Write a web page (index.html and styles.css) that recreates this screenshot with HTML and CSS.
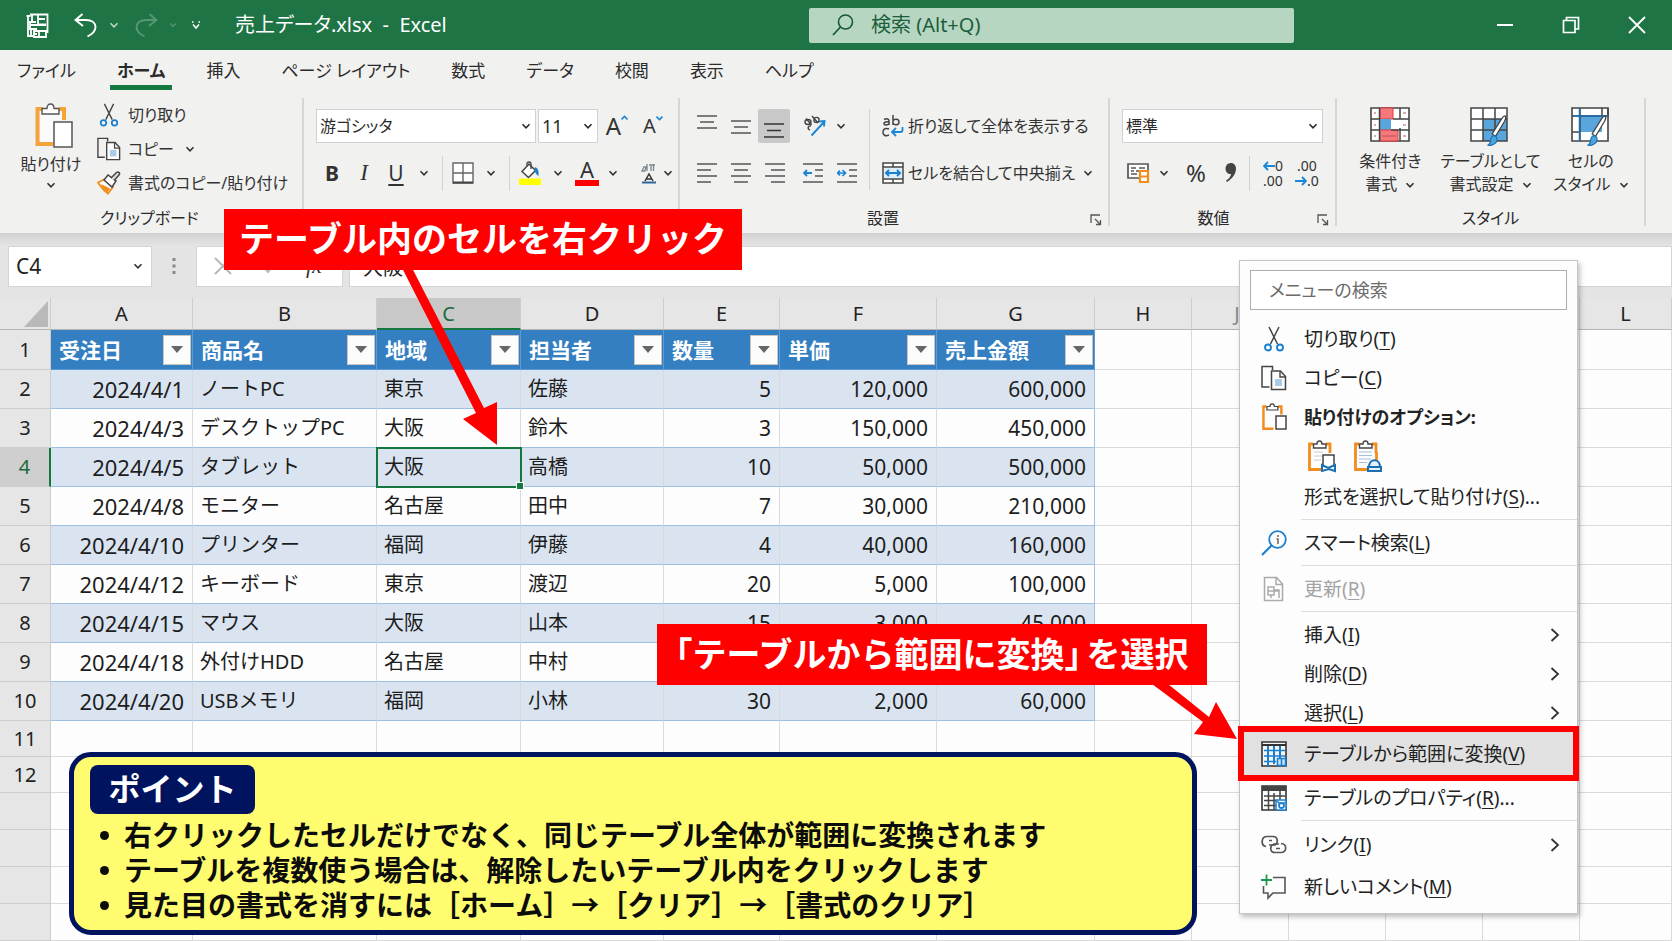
FILE: index.html
```html
<!DOCTYPE html>
<html lang="ja">
<head>
<meta charset="utf-8">
<title>売上データ.xlsx - Excel</title>
<link rel="stylesheet" href="styles.css">
</head>
<body>
<svg class="defs" aria-hidden="true">
  <symbol id="chev" viewBox="0 0 10 10"><path d="M1.5 3.2 5 6.8 8.5 3.2" fill="none" stroke="currentColor" stroke-width="1.6"/></symbol>
  <symbol id="right" viewBox="0 0 10 16"><path d="M1.500 2 8 8 1.500 14" fill="none" stroke="#333" stroke-width="1.800"/></symbol>
  <symbol id="scissors" viewBox="0 0 22 26"><path d="M6 1 14.500 18M16 1 7.500 18" fill="none" stroke="#444" stroke-width="1.500"/><circle cx="5" cy="21.500" r="3" fill="none" stroke="#1b7fcf" stroke-width="1.900"/><circle cx="17" cy="21.500" r="3" fill="none" stroke="#1b7fcf" stroke-width="1.900"/></symbol>
  <symbol id="copy" viewBox="0 0 26 26"><path d="M8.500 22H1V1.500h10.500V5" fill="none" stroke="#444" stroke-width="1.500"/><path d="M10.500 6h9l5 5.500V24.500h-14z" fill="#fdfdfd" stroke="#444" stroke-width="1.500"/><path d="M19 6.500V12h5.500" fill="none" stroke="#444" stroke-width="1.400"/><path d="M14 14h7v7h-7z" fill="#a9cbe6"/></symbol>
  <symbol id="paste" viewBox="0 0 40 46"><path d="M9 6H3.500v35H19M25 6h5v11" fill="none" stroke="#f5a33b" stroke-width="4"/><path d="M6 8h22v9h-9v22H6z" fill="#fafafa"/><path d="M8 11V5.500h5C13 2.500 14.500 1 16.500 1S20 2.500 20 5.500h5V11z" fill="#fff" stroke="#555" stroke-width="1.400"/><path d="M20 19h18v25H20z" fill="#fff" stroke="#555" stroke-width="1.500"/></symbol>
  <symbol id="clip" viewBox="0 0 28 32"><path d="M6 4H2.500v25.500H14M19 4h4v9" fill="none" stroke="#f28c1c" stroke-width="2.800"/><path d="M6.500 8V4H10c0-2 1-3 2.500-3S15 2 15 4h4v4z" fill="#fff" stroke="#444" stroke-width="1.400"/></symbol>
  <symbol id="launch" viewBox="0 0 12 12"><path d="M1 9V1h9M5 5l5.500 5.500M10.500 6v4.500H6" fill="none" stroke="#555" stroke-width="1.300"/></symbol>
  <symbol id="brush" viewBox="0 0 20 34"><path d="M18.500 1c1.500 2 0 4-1 6L8.500 22 5 19.500 15 3.500c1-1.500 2-2.500 3.500-2.500z" fill="#fff" stroke="#444" stroke-width="1.300"/><path d="M1 31c3-1 1.500-7 4-9s6 1 5 4.500S4 32 1 31z" fill="#4ba3dc" stroke="#1c6fb5" stroke-width="1.200"/></symbol>
</svg>

<div class="app">
  <header class="titlebar">
    <div class="quick">
      <button class="tool" aria-label="上書き保存"><svg width="24" height="25" viewBox="0 0 24 25"><path d="M5 1.500H22.500V20M3 4V23h5M1.500 3h4M7 2v7h4M7 9H5v7h7M13 6h7M13 11.500h8M13 2v9M6 16v7M9 18h12v6H9zM14 18v6M5 12h16M8 21h4" fill="none" stroke="#fff" stroke-width="1.800"/></svg></button>
      <button class="tool undo" aria-label="元に戻す"><svg width="24" height="26" viewBox="0 0 24 26"><path d="M8.500 2 1.500 8l7.500 6M2 8h10c6 0 9.500 3 9.500 7s-3 7-8 9.500" fill="none" stroke="#fff" stroke-width="1.900"/></svg><svg class="faint" width="10" height="10"><use href="#chev"/></svg></button>
      <button class="tool redo" aria-label="やり直し"><svg width="24" height="26" viewBox="0 0 24 26"><path d="M15.500 2l7 6-7.500 6M22 8H12C6 8 2.500 11 2.500 15s3 7 8 9.500" fill="none" stroke="#fff" stroke-width="1.900"/></svg><svg width="8" height="8"><use href="#chev"/></svg></button>
      <button class="tool more" aria-label="クイック アクセスのカスタマイズ"><svg width="10" height="10" viewBox="0 0 10 10"><path d="M1 2h1.500M7.500 2H9M2 4.500 5 8l3-3.500" fill="none" stroke="#fff" stroke-width="1.500"/></svg></button>
    </div>
    <h1 class="doc">売上データ.xlsx&nbsp; -&nbsp; Excel</h1>
    <label class="search">
      <svg width="24" height="24" viewBox="0 0 24 24"><circle cx="14.500" cy="9" r="7" fill="none" stroke="#145a34" stroke-width="1.600"/><path d="M9.500 14 2 22" stroke="#145a34" stroke-width="1.800"/></svg>
      <input type="text" placeholder="検索 (Alt+Q)" aria-label="検索">
    </label>
    <div class="winbtns">
      <button class="tool" aria-label="最小化"><svg width="18" height="20" viewBox="0 0 18 20"><path d="M1 10h16" stroke="#fff" stroke-width="2"/></svg></button>
      <button class="tool" aria-label="元のサイズに戻す"><svg width="18" height="18" viewBox="0 0 18 18"><path d="M1.500 4.500h11.500v12H1.500zM4.500 4V1.500h12V13H13" fill="none" stroke="#fff" stroke-width="1.700"/></svg></button>
      <button class="tool" aria-label="閉じる"><svg width="18" height="18" viewBox="0 0 18 18"><path d="M1 1l16 16M17 1 1 17" stroke="#fff" stroke-width="1.800"/></svg></button>
    </div>
  </header>

  <nav class="tabs">
    <a href="#">ファイル</a><a href="#" class="active">ホーム</a><a href="#">挿入</a><a href="#">ページ レイアウト</a><a href="#">数式</a><a href="#">データ</a><a href="#">校閲</a><a href="#">表示</a><a href="#">ヘルプ</a>
  </nav>

  <div class="ribbon">
    <section class="group clipboard">
      <div class="clip-body">
        <button class="tool big"><svg class="board" width="40" height="46"><use href="#paste"/></svg><span>貼り付け</span><svg width="10" height="10"><use href="#chev"/></svg></button>
        <div class="clip-list">
          <button class="tool line"><svg width="24" height="24"><use href="#scissors"/></svg>切り取り</button>
          <button class="tool line"><svg width="24" height="24"><use href="#copy"/></svg>コピー<svg class="gapped" width="10" height="10"><use href="#chev"/></svg></button>
          <button class="tool line"><svg width="24" height="24" viewBox="0 0 24 24"><path d="M1 11.500l6-3 9 7.500-5 6.500C7 20 4 16 1 11.500z" fill="#fff" stroke="#f28c1c" stroke-width="1.800"/><path d="M4 13l9 4.500-2.500 4C7 19 5 16 4 13z" fill="#f28c1c"/><path d="M7 9l4-5 8 6-4 6z" fill="#fff" stroke="#444" stroke-width="1.500"/><path d="M14 7l5.500-5.500c2-1.500 4 1 2.500 2.500L17 9.500" fill="#ddd" stroke="#444" stroke-width="1.500"/></svg>書式のコピー/貼り付け</button>
        </div>
      </div>
      <h2 class="caption">クリップボード</h2>
    </section>

    <section class="group font">
      <div class="row combos">
        <span class="combo w-font"><select aria-label="フォント"><option>游ゴシッタ</option></select><svg width="10" height="10"><use href="#chev"/></svg></span>
        <span class="combo w-size"><select aria-label="フォント サイズ"><option>11</option></select><svg width="10" height="10"><use href="#chev"/></svg></span>
        <button class="tool grow" aria-label="フォント サイズの拡大">A<svg width="7" height="6" viewBox="0 0 7 6"><path d="M.5 4.500 3.500 1.500l3 3" fill="none" stroke="#1b86d6" stroke-width="1.600"/></svg></button>
        <button class="tool shrink" aria-label="フォント サイズの縮小">A<svg width="7" height="6" viewBox="0 0 7 6"><path d="M.5 1.500 3.500 4.500l3-3" fill="none" stroke="#1b86d6" stroke-width="1.600"/></svg></button>
      </div>
      <div class="row marks">
        <button class="tool w32 bold">B</button><button class="tool w32 ital">I</button><button class="tool w32 under">U</button><button class="tool w24" aria-label="下線の種類"><svg width="10" height="10"><use href="#chev"/></svg></button>
        <i class="bar"></i>
        <button class="tool w32" aria-label="罫線"><svg width="22" height="22" viewBox="0 0 22 22"><path d="M1 1h20v20H1zM11 1v20M1 11h20" fill="#fff" stroke="#666" stroke-width="1.400"/><path d="M1 20.500h20" stroke="#444" stroke-width="2"/></svg></button><button class="tool w24" aria-label="罫線の種類"><svg width="10" height="10"><use href="#chev"/></svg></button>
        <i class="bar"></i>
        <button class="tool w32" aria-label="塗りつぶしの色"><svg width="24" height="24" viewBox="0 0 24 24"><path d="M4 10.500 11 3l6.500 6.500-7 7z" fill="#fff" stroke="#444" stroke-width="1.500"/><path d="M9 5V2.500c0-2 4-2 4 0V8" fill="none" stroke="#444" stroke-width="1.300"/><path d="M17 6c3 1 4 4 3.500 9-2-1-3.500-4-4-6z" fill="#1b7fcf"/><path d="M1 17.500h22V24H1z" fill="#ff0"/></svg></button><button class="tool w24" aria-label="塗りつぶしの色の選択"><svg width="10" height="10"><use href="#chev"/></svg></button>
        <button class="tool w32 color" aria-label="フォントの色">A</button><button class="tool w24" aria-label="フォントの色の選択"><svg width="10" height="10"><use href="#chev"/></svg></button>
        <button class="tool w32 ruby" aria-label="ふりがなの表示"><svg width="16" height="22" viewBox="0 0 16 22"><path d="M1 9l2-4h2l-1 4zM6 9V2M10 9V4M12.500 9V2M8 3h6" fill="none" stroke="#7d8790" stroke-width="1.300"/><path d="M4 19l4-7 4 7M5.500 17h5" fill="none" stroke="#333" stroke-width="1.500"/><path d="M1 20.500h14" stroke="#33679b" stroke-width="2"/></svg><svg width="10" height="10"><use href="#chev"/></svg></button>
      </div>
    </section>

    <section class="group align">
      <div class="align-body">
        <div class="align-left">
          <div class="row">
            <button class="tool w34" aria-label="上揃え"><svg width="20" height="26" viewBox="0 0 20 26"><path d="M0 3h20M3 9h14M0 15h20" stroke="#555" stroke-width="1.600"/></svg></button><button class="tool w34" aria-label="上下中央揃え"><svg width="20" height="26" viewBox="0 0 20 26"><path d="M0 8h20M3 14h14M0 20h20" stroke="#555" stroke-width="1.600"/></svg></button><button class="tool w34 pressed" aria-label="下揃え"><svg width="20" height="26" viewBox="0 0 20 26"><path d="M0 11h20M3 17.500h14M0 24h20" stroke="#333" stroke-width="1.700"/></svg></button>
            <button class="tool orient" aria-label="方向"><svg width="24" height="24" viewBox="0 0 24 24"><ellipse cx="5" cy="8" rx="3" ry="2.500" fill="none" stroke="#444" stroke-width="1.400"/><path d="M3 4.500 8.500 11M9 2l6 7" stroke="#444" stroke-width="1.400"/><circle cx="13.500" cy="6" r="2.600" fill="none" stroke="#444" stroke-width="1.400"/><path d="M8 12c-3-1-4 3-1 4" fill="none" stroke="#444" stroke-width="1.400"/><path d="M8.500 21.500 20.500 8.500M16 7.500l5.500-.5-.5 5.500" fill="none" stroke="#1b86d6" stroke-width="1.900"/></svg><svg width="10" height="10"><use href="#chev"/></svg></button>
          </div>
          <div class="row">
            <button class="tool w34" aria-label="左揃え"><svg width="20" height="20" viewBox="0 0 20 20"><path d="M0 1h20M0 7h14M0 13h20M0 19h14" stroke="#555" stroke-width="1.600"/></svg></button><button class="tool w34" aria-label="中央揃え"><svg width="20" height="20" viewBox="0 0 20 20"><path d="M0 1h20M3 7h14M0 13h20M3 19h14" stroke="#555" stroke-width="1.600"/></svg></button><button class="tool w34" aria-label="右揃え"><svg width="20" height="20" viewBox="0 0 20 20"><path d="M0 1h20M6 7h14M0 13h20M6 19h14" stroke="#555" stroke-width="1.600"/></svg></button>
            <button class="tool indent" aria-label="インデントを減らす"><svg width="20" height="20" viewBox="0 0 20 20"><path d="M0 1h20M12 7h8M12 13h8M0 19h20" stroke="#555" stroke-width="1.600"/><path d="M1 10h8M4 7l-3 3 3 3" fill="none" stroke="#1b86d6" stroke-width="1.800"/></svg></button><button class="tool w34" aria-label="インデントを増やす"><svg width="20" height="20" viewBox="0 0 20 20"><path d="M0 1h20M12 7h8M12 13h8M0 19h20" stroke="#555" stroke-width="1.600"/><path d="M0 10h8M3 7.500.5 10 3 12.500M5.500 7 8.500 10l-3 3" fill="none" stroke="#1b86d6" stroke-width="1.700"/></svg></button>
          </div>
        </div>
        <div class="align-right">
          <button class="tool line"><svg width="22" height="24" viewBox="0 0 22 24"><path d="M2 5.500c3-1.500 5-.5 5 1.500v4M7 8C3 7.500 2 8.500 2 9.500c0 2 4 2 5 0M11 1v10M11 7c1-2.500 6-2.500 6 1s-5 3.500-6 1M7 15c-5-2-6 1.500-6 3.500s2 4.500 6 2.500" fill="none" stroke="#444" stroke-width="1.500"/><path d="M20.500 13v3c0 1-1 2-2 2h-8M14 14l-4 4 4 4" fill="none" stroke="#1b86d6" stroke-width="1.800"/></svg>折り返して全体を表示する</button>
          <button class="tool line"><svg width="22" height="22" viewBox="0 0 22 22"><path d="M1 1h20v20H1zM1 5h20M1 17h20M11 1v4M11 17v4" fill="#fff" stroke="#444" stroke-width="1.500"/><path d="M2 6h18v10H2z" fill="#dceefb"/><path d="M4 11h14M7 8l-3 3 3 3M15 8l3 3-3 3" fill="none" stroke="#1b7fcf" stroke-width="1.900"/></svg>セルを結合して中央揃え<svg class="gapped small" width="10" height="10"><use href="#chev"/></svg></button>
        </div>
      </div>
      <h2 class="caption center">設置</h2>
      <button class="tool launch" aria-label="配置の設定"><svg width="12" height="12"><use href="#launch"/></svg></button>
    </section>

    <section class="group number">
      <div class="row"><span class="combo w-full"><select aria-label="数値の書式"><option>標準</option></select><svg width="10" height="10"><use href="#chev"/></svg></span></div>
      <div class="row nums">
        <button class="tool w34" aria-label="通貨表示形式"><svg width="24" height="22" viewBox="0 0 24 22"><path d="M1 2h20v14H1z" fill="#fff" stroke="#555" stroke-width="1.700"/><path d="M4 6h5M4 9h3M4 12h6M12 6h6M9 9h4" stroke="#555" stroke-width="1.500"/><path d="M13 9h8v11h-8zM13 14.500h8" fill="#fff" stroke="#f28c1c" stroke-width="2.200"/></svg></button><button class="tool w24" aria-label="通貨の選択"><svg width="10" height="10"><use href="#chev"/></svg></button>
        <button class="tool pct">%</button><button class="tool w34" aria-label="桁区切り"><svg width="12" height="20" viewBox="0 0 12 20"><path d="M6 0c7 0 7.500 12-4 19l-1-1.500c3.500-2 5-4.500 5-6.500C-1.500 11-1 0 6 0z" fill="#444"/></svg></button>
        <i class="bar"></i>
        <button class="tool dec" aria-label="小数点以下の表示桁数を増やす"><span><svg width="12" height="10" viewBox="0 0 12 10"><path d="M1 5h11M5 1 1 5l4 4" fill="none" stroke="#1b86d6" stroke-width="1.900"/></svg>0</span><span>.00</span></button>
        <button class="tool dec" aria-label="小数点以下の表示桁数を減らす"><span>.00</span><span><svg width="12" height="10" viewBox="0 0 12 10"><path d="M0 5h11M7 1l4 4-4 4" fill="none" stroke="#1b86d6" stroke-width="1.900"/></svg>.0</span></button>
      </div>
      <h2 class="caption center">数値</h2>
      <button class="tool launch" aria-label="数値の設定"><svg width="12" height="12"><use href="#launch"/></svg></button>
    </section>

    <section class="group styles">
      <div class="styles-body">
        <button class="tool style"><svg width="42" height="44" viewBox="0 0 42 44"><path d="M2 4h38v33H2z" fill="#fff" stroke="#444" stroke-width="1.600"/><path d="M11 4h13v11H11z" fill="#f5787c" stroke="#e0393f"/><path d="M11 15h11v11H11z" fill="#58a6dc"/><path d="M11 26h18v11H11z" fill="#f5787c" stroke="#e0393f"/><path d="M2 15h9M24 15h16M2 26h9M22 26h18M10.500 4v33M31 4v11M31 24v13" stroke="#444" stroke-width="1.500"/><path d="M13 32h14M5 9h2M5 21h2M5 32h2M34 9h3M34 21h3M34 32h3" stroke="#b55" stroke-width="1"/></svg><span>条件付き</span><span>書式<svg width="10" height="10"><use href="#chev"/></svg></span></button>
        <button class="tool style"><svg width="42" height="44" viewBox="0 0 42 44"><path d="M2 4h36v33H2z" fill="#fff"/><path d="M14 15h24v22H14z" fill="#58a6dc"/><path d="M2 4h36v33H2zM2 15h36M2 26h36M14 4v33M26 4v33" fill="none" stroke="#444" stroke-width="1.500"/><use href="#brush" x="13" y="11" width="30" height="33"/></svg><span>テーブルとして</span><span>書式設定<svg width="10" height="10"><use href="#chev"/></svg></span></button>
        <button class="tool style"><svg width="42" height="44" viewBox="0 0 42 44"><path d="M2 4h36v33H2z" fill="#fff" stroke="#444" stroke-width="1.600"/><path d="M10 12h22v16H10z" fill="#58a6dc"/><path d="M2 12h36V4M10 4v33M32 4v8M2 28h8" fill="none" stroke="#444" stroke-width="1.500"/><path d="M9.500 4v33M3 12h35" stroke="#1c6fb5" stroke-width="1.500"/><use href="#brush" x="11" y="11" width="32" height="33"/></svg><span>セルの</span><span>スタイル<svg width="10" height="10"><use href="#chev"/></svg></span></button>
      </div>
      <h2 class="caption center">スタイル</h2>
    </section>
  </div>

  <div class="formula">
    <div class="namebox"><input type="text" value="C4" aria-label="名前ボックス"><button class="tool" aria-label="名前の一覧"><svg width="10" height="10"><use href="#chev"/></svg></button></div>
    <svg class="dots" width="4" height="18" viewBox="0 0 4 18"><path d="M.5 1h3v3h-3zM.5 7.500h3v3h-3zM.5 14h3v3h-3z" fill="#888"/></svg>
    <div class="fxbox">
      <button class="tool" aria-label="キャンセル"><svg width="18" height="18" viewBox="0 0 18 18"><path d="M1 1l16 16M17 1 1 17" stroke="#b5b5b5" stroke-width="1.800"/></svg></button>
      <button class="tool" aria-label="入力"><svg width="18" height="16" viewBox="0 0 18 16"><path d="M2 7l6 7 9-13" fill="none" stroke="#b5b5b5" stroke-width="1.800"/></svg></button>
      <button class="tool fx">fx</button>
    </div>
    <input class="value" type="text" value="大阪" aria-label="数式バー">
  </div>

  <main class="sheet">
    <table class="grid">
      <colgroup><col class="c0"><col class="ca"><col class="cb"><col class="cc"><col class="cd"><col class="ce"><col class="cf"><col class="cg"><col class="cn"><col class="cn"><col class="cn"><col class="cn"><col class="cn"><col></colgroup>
      <thead>
        <tr class="letters"><th class="corner"><svg width="24" height="26" viewBox="0 0 24 26"><path d="M24 0v26H0z" fill="#b9b9b9"/></svg></th><th>A</th><th>B</th><th class="sel">C</th><th>D</th><th>E</th><th>F</th><th>G</th><th>H</th><th class="dim">J</th><th></th><th></th><th></th><th>L</th></tr>
      </thead>
      <tbody>
        <tr class="head"><th>1</th>
          <td><div>受注日<button aria-label="受注日の絞り込み"></button></div></td><td><div>商品名<button aria-label="商品名の絞り込み"></button></div></td><td><div>地域<button aria-label="地域の絞り込み"></button></div></td><td><div>担当者<button aria-label="担当者の絞り込み"></button></div></td><td><div>数量<button aria-label="数量の絞り込み"></button></div></td><td><div>単価<button aria-label="単価の絞り込み"></button></div></td><td><div>売上金額<button aria-label="売上金額の絞り込み"></button></div></td><td></td><td></td><td></td><td></td><td></td><td></td></tr>
        <tr class="rec band"><th>2</th><td>2024/4/1</td><td>ノートPC</td><td>東京</td><td>佐藤</td><td>5</td><td>120,000</td><td>600,000</td><td></td><td></td><td></td><td></td><td></td><td></td></tr>
        <tr class="rec"><th>3</th><td>2024/4/3</td><td>デスクトップPC</td><td>大阪</td><td>鈴木</td><td>3</td><td>150,000</td><td>450,000</td><td></td><td></td><td></td><td></td><td></td><td></td></tr>
        <tr class="rec band current"><th>4</th><td>2024/4/5</td><td>タブレット</td><td class="picked">大阪</td><td>高橋</td><td>10</td><td>50,000</td><td>500,000</td><td></td><td></td><td></td><td></td><td></td><td></td></tr>
        <tr class="rec"><th>5</th><td>2024/4/8</td><td>モニター</td><td>名古屋</td><td>田中</td><td>7</td><td>30,000</td><td>210,000</td><td></td><td></td><td></td><td></td><td></td><td></td></tr>
        <tr class="rec band"><th>6</th><td>2024/4/10</td><td>プリンター</td><td>福岡</td><td>伊藤</td><td>4</td><td>40,000</td><td>160,000</td><td></td><td></td><td></td><td></td><td></td><td></td></tr>
        <tr class="rec"><th>7</th><td>2024/4/12</td><td>キーボード</td><td>東京</td><td>渡辺</td><td>20</td><td>5,000</td><td>100,000</td><td></td><td></td><td></td><td></td><td></td><td></td></tr>
        <tr class="rec band"><th>8</th><td>2024/4/15</td><td>マウス</td><td>大阪</td><td>山本</td><td>15</td><td>3,000</td><td>45,000</td><td></td><td></td><td></td><td></td><td></td><td></td></tr>
        <tr class="rec"><th>9</th><td>2024/4/18</td><td>外付けHDD</td><td>名古屋</td><td>中村</td><td></td><td></td><td></td><td></td><td></td><td></td><td></td><td></td><td></td></tr>
        <tr class="rec band"><th>10</th><td>2024/4/20</td><td>USBメモリ</td><td>福岡</td><td>小林</td><td>30</td><td>2,000</td><td>60,000</td><td></td><td></td><td></td><td></td><td></td><td></td></tr>
        <tr class="blank short"><th>11</th><td></td><td></td><td></td><td></td><td></td><td></td><td></td><td></td><td></td><td></td><td></td><td></td><td></td></tr>
        <tr class="blank short"><th>12</th><td></td><td></td><td></td><td></td><td></td><td></td><td></td><td></td><td></td><td></td><td></td><td></td><td></td></tr>
        <tr class="blank"><th></th><td></td><td></td><td></td><td></td><td></td><td></td><td></td><td></td><td></td><td></td><td></td><td></td><td></td></tr>
        <tr class="blank"><th></th><td></td><td></td><td></td><td></td><td></td><td></td><td></td><td></td><td></td><td></td><td></td><td></td><td></td></tr>
        <tr class="blank"><th></th><td></td><td></td><td></td><td></td><td></td><td></td><td></td><td></td><td></td><td></td><td></td><td></td><td></td></tr>
        <tr class="blank"><th></th><td></td><td></td><td></td><td></td><td></td><td></td><td></td><td></td><td></td><td></td><td></td><td></td><td></td></tr>
      </tbody>
    </table>
  </main>

  <div class="menu" role="menu">
    <input type="text" placeholder="メニューの検索" aria-label="メニューの検索">
    <button class="item" role="menuitem"><svg width="22" height="26"><use href="#scissors"/></svg><span>切り取り(<u>T</u>)</span></button>
    <button class="item" role="menuitem"><svg width="26" height="26"><use href="#copy"/></svg><span>コピー(<u>C</u>)</span></button>
    <div class="item strong"><svg width="26" height="28" viewBox="0 0 26 28"><use href="#clip" width="25" height="28" x="0" y="0"/><path d="M15 13h10v13H15z" fill="#fff" stroke="#444" stroke-width="1.500"/></svg><span>貼り付けのオプション:</span></div>
    <div class="pastes">
      <button class="tool" aria-label="貼り付け"><svg width="30" height="33" viewBox="0 0 30 33"><use href="#clip" width="28" height="32"/><path d="M7 12h9M7 16h8M7 20h7" stroke="#ccc"/><path d="M16 15h11v14H16z" fill="#fff" stroke="#444" stroke-width="1.500"/><path d="M15 25l6 3 7-3v6l-6-2-7 2z" fill="#fff" stroke="#1c6fb5" stroke-width="2"/></svg></button>
      <button class="tool" aria-label="値"><svg width="30" height="33" viewBox="0 0 30 33"><use href="#clip" width="28" height="32"/><path d="M23.500 12v10" stroke="#f28c1c" stroke-width="2.800"/><path d="M6 12h13M6 15.500h13M6 19h12M6 22.500h8" stroke="#9fc0de"/><path d="M16 27c0-9 11-9 11 0M15 27h13v4H15z" fill="#e6f2fb" stroke="#1c6fb5" stroke-width="2"/></svg></button>
    </div>
    <button class="item" role="menuitem"><i></i><span>形式を選択して貼り付け(<u>S</u>)...</span></button>
    <hr>
    <button class="item" role="menuitem"><svg width="26" height="26" viewBox="0 0 26 26"><circle cx="16.500" cy="9.500" r="8.300" fill="none" stroke="#1b7fcf" stroke-width="1.800"/><path d="M10.500 15.500 1 25" stroke="#1b7fcf" stroke-width="2.200"/><path d="M17 5v2M15.500 9h1.500v5" fill="none" stroke="#666" stroke-width="1.500"/></svg><span>スマート検索(<u>L</u>)</span></button>
    <hr>
    <button class="item off" role="menuitem" disabled><svg width="22" height="26" viewBox="0 0 22 26"><path d="M1.500 1.500h12l6 6.500v16.500h-18zM13 2v6.500h6.500M5 11h6v8H5zM11 14h5v8M5 15h11M8 19v3" fill="none" stroke="#aaa" stroke-width="1.500"/></svg><span>更新(<u>R</u>)</span></button>
    <hr>
    <button class="item" role="menuitem"><i></i><span>挿入(<u>I</u>)</span><svg class="arr" width="10" height="16"><use href="#right"/></svg></button>
    <button class="item" role="menuitem"><i></i><span>削除(<u>D</u>)</span><svg class="arr" width="10" height="16"><use href="#right"/></svg></button>
    <button class="item" role="menuitem"><i></i><span>選択(<u>L</u>)</span><svg class="arr" width="10" height="16"><use href="#right"/></svg></button>
    <button class="item hot" role="menuitem"><svg width="26" height="26" viewBox="0 0 26 26"><path d="M1 1h24v24H1z" fill="#f4f4f4" stroke="#333" stroke-width="1.600"/><path d="M1 4h24" stroke="#333" stroke-width="2"/><path d="M7 5v20M13 5v18M19 5v12" stroke="#1b7fcf" stroke-width="2"/><path d="M3 9.500h21M3 15h21M3 20.500h12" stroke="#1b7fcf" stroke-width="1.700"/><path d="M16.500 17.500h8v7h-8zM20.500 18v6" fill="#cfe6f7" stroke="#1b7fcf" stroke-width="1.600"/></svg><span>テーブルから範囲に変換(<u>V</u>)</span></button>
    <button class="item" role="menuitem"><svg width="26" height="26" viewBox="0 0 26 26"><path d="M1 1h24v24H1z" fill="#fff" stroke="#333" stroke-width="1.600"/><path d="M1 3.500h24" stroke="#444" stroke-width="5"/><path d="M7.500 6v19M13 8v17M19 6v10M3 11h21M3 15.500h12M3 20.500h12" stroke="#444" stroke-width="1.500"/><path d="M15 15h10v10H15z" fill="#fff" stroke="#1b7fcf" stroke-width="1.500"/><circle cx="20.500" cy="20.500" r="2.500" fill="none" stroke="#1b7fcf" stroke-width="1.800"/><path d="M16 16l3 3M24 17l-2 2" stroke="#1b7fcf" stroke-width="1.500"/></svg><span>テーブルのプロパティ(<u>R</u>)...</span></button>
    <hr>
    <button class="item tall" role="menuitem"><svg width="26" height="20" viewBox="0 0 26 20"><path d="M5 11.500C-.5 10.500 0 1.500 6 1.500h6c5 0 5.500 6.500 2 8.500H8" fill="none" stroke="#555" stroke-width="1.700"/><path d="M11 5.500H8M20 8.500c6.500.5 6 9 0 9h-6c-5.500 0-5.500-7-1-8.500h5M15 13.500h4" fill="none" stroke="#555" stroke-width="1.700"/></svg><span>リンク(<u>I</u>)</span><svg class="arr" width="10" height="16"><use href="#right"/></svg></button>
    <button class="item tall" role="menuitem"><svg width="26" height="26" viewBox="0 0 26 26"><path d="M12 3.500h12V19H12l-5 5v-5H2.500v-7" fill="none" stroke="#555" stroke-width="1.600"/><path d="M5.500.5v11M0 6h11" stroke="#1a9a4a" stroke-width="1.800"/></svg><span>新しいコメント(<u>M</u>)</span></button>
  </div>

  <section class="point">
    <h2>ポイント</h2>
    <ul>
      <li>右クリックしたセルだけでなく、同じテーブル全体が範囲に変換されます</li>
      <li>テーブルを複数使う場合は、解除したいテーブル内をクリックします</li>
      <li>見た目の書式を消すには［ホーム］→［クリア］→［書式のクリア］</li>
    </ul>
  </section>

  <svg class="arrow one" width="110" height="190" viewBox="0 0 110 190" aria-hidden="true"><path d="M8 8 18 8 92 152 105 146V189L71 163 84 157z" fill="#f00"/></svg>
  <svg class="arrow two" width="90" height="60" viewBox="0 0 90 60" aria-hidden="true"><path d="M2 0H18L59 33 66 18 87 55 44 50 53 38z" fill="#f00"/></svg>
  <p class="callout first">テーブル内のセルを右クリック</p>
  <p class="callout second"><span class="half">「</span>テーブルから範囲に変換<span class="half close">」</span>を選択</p>
</div>
</body>
</html>
```

FILE: styles.css
```css
* { box-sizing: border-box; }

body {
  margin: 0;
  font: 18px/24px "Noto Sans", "Noto Sans CJK JP", sans-serif;
  color: #2b2b2b;
  background: #fdfdfd;
}

h1, h2, p, ul { margin: 0; padding: 0; }
h1, h2 { font-weight: 400; }
svg { display: block; flex: none; }
.defs { position: absolute; width: 0; height: 0; }

.app {
  position: relative;
  display: flex;
  flex-direction: column;
  min-height: 100vh;
  overflow: hidden;
}

.tool {
  display: flex;
  align-items: center;
  justify-content: center;
  padding: 0;
  border: 0;
  background: none;
  color: #333;
  font: inherit;
  font-feature-settings: inherit;
  white-space: nowrap;
}

/* Title bar */
.titlebar {
  display: flex;
  align-items: center;
  height: 50px;
  padding: 0 26px;
  background: #1e7444;
}
.quick { display: flex; align-items: center; width: 209px; }
.quick .tool:first-child { margin-left: -1px; }
.undo { margin-left: 25px; gap: 11px; }
.undo svg, .more svg { color: #fff; }
.undo .faint { opacity: .7; }
.redo { margin-left: 15px; gap: 11px; opacity: .25; }
.redo svg { color: #fff; }
.more { margin-left: 14px; }
.doc { flex: 1; color: #fff; font-size: 20px; font-feature-settings: "palt"; white-space: nowrap; }
.search {
  display: flex;
  align-items: center;
  gap: 14px;
  width: 485px;
  height: 35px;
  padding-left: 22px;
  border-radius: 2px;
  background: #b7d6c2;
}
.search input {
  flex: 1;
  min-width: 0;
  border: 0;
  outline: 0;
  background: none;
  font: inherit;
  font-size: 20px;
}
.search input::placeholder { color: #1b5e3a; opacity: 1; }
.winbtns { display: flex; gap: 48px; margin-left: 202px; }

/* Tabs */
.tabs {
  display: flex;
  gap: 41px;
  height: 48px;
  padding: 2px 17px 0;
  background: #f1f1f0;
  font-size: 17px;
  font-feature-settings: "palt";
}
.tabs a {
  height: 38px;
  line-height: 38px;
  color: #2b2b2b;
  text-decoration: none;
  white-space: nowrap;
}
.tabs .active {
  margin: 0 -7px;
  padding: 0 7px;
  border-bottom: 5px solid #15793f;
  font-weight: 700;
}

/* Ribbon */
.ribbon {
  display: grid;
  grid-template-columns: 304px 376px 430px 227px 309px;
  height: 136px;
  padding-bottom: 7px;
  background: #f1f1f0;
  border-bottom: 1px solid #cfcfcf;
  font-size: 16px;
  font-feature-settings: "palt";
}
.group {
  position: relative;
  display: flex;
  flex-direction: column;
  gap: 13px;
  padding-top: 11px;
  border-right: 2px solid #d6d6d6;
}
.row { display: flex; align-items: center; height: 34px; }
.caption { margin-top: auto; font-size: 16px; line-height: 16px; }
.center { text-align: center; }
.launch { position: absolute; right: 6px; bottom: 0; }
.bar { width: 1px; height: 35px; background: #d2d2d2; }
.w24 { width: 24px; }
.w32 { width: 32px; }
.w34 { width: 34px; }

.clipboard { gap: 0; padding: 0 0 0 20px; }
.clip-body { display: flex; gap: 15px; }
.big { flex-direction: column; justify-content: flex-start; width: 62px; padding-top: 5px; }
.board { margin-left: 6px; }
.big span { margin-top: 3px; }
.big svg:last-child { margin-top: 4px; }
.clip-list { display: flex; flex-direction: column; }
.line { height: 34px; gap: 7px; justify-content: flex-start; }
.gapped { margin-left: 4px; }
.clipboard .caption { padding-left: 80px; }

.combo {
  display: flex;
  align-items: center;
  height: 34px;
  padding-right: 4px;
  border: 1px solid #d0d0d0;
  background: #fff;
}
.combo select {
  flex: 1;
  min-width: 0;
  height: 30px;
  padding: 0 3px;
  border: 0;
  appearance: none;
  background: none;
  color: #2b2b2b;
  font: inherit;
  font-feature-settings: inherit;
}
.w-size select { font-size: 18px; }
.w-font { width: 220px; }
.w-size { width: 60px; }
.w-full { width: 201px; }
.combos { gap: 2px; padding-left: 12px; }
.grow, .shrink { align-items: flex-start; width: 34px; font-size: 24px; line-height: 30px; }
.shrink { font-size: 20px; }
.grow svg, .shrink svg { margin-top: 4px; }
.marks { padding-left: 12px; font-size: 21px; }
.marks .bar { margin: 0 4px 0 6px; }
.bold { font-weight: 700; }
.ital { font-family: "Liberation Serif", serif; font-style: italic; font-size: 23px; }
.under { text-decoration: underline; text-underline-offset: 3px; }
.color { align-self: flex-start; height: 29px; width: 24px; margin: 1px 2px 0 5px; border-bottom: 6px solid #f00; font-size: 22px; }
.ruby { gap: 6px; margin-left: 16px; }

.align-body { display: flex; }
.align-left { display: flex; flex-direction: column; gap: 13px; width: 190px; padding-left: 10px; border-right: 1px solid #d2d2d2; }
.align-right { display: flex; flex-direction: column; gap: 13px; padding-left: 12px; }
.align-right .line { gap: 4px; }
.pressed { width: 32px; height: 34px; margin-right: 2px; border-radius: 2px; background: #c9c9c9; }
.orient { margin-left: 11px; gap: 9px; }
.indent { width: 34px; margin-left: 4px; }
.align .caption { padding-right: 22px; }

.number { padding-left: 12px; }
.number .caption { padding-right: 30px; }
.nums .w34:first-child { width: 26px; margin-left: 4px; }
.pct { width: 36px; margin-left: 2px; font-size: 24px; }
.nums .bar { margin: 0 6px 0 1px; }
.dec { flex-direction: column; width: 34px; font-size: 14px; line-height: 15px; }
.dec span { display: flex; align-items: center; }

.styles { padding: 6px 3px 0; gap: 0; }
.styles-body { display: grid; grid-template-columns: repeat(3, 1fr); }
.style { flex-direction: column; line-height: 23px; }
.style svg { margin-bottom: 2px; }
.style span { display: flex; align-items: center; gap: 8px; }
.style span svg { margin: 0; }

/* Formula bar */
.formula {
  display: flex;
  align-items: center;
  height: 64px;
  padding: 0 0 0 8px;
  background: linear-gradient(#d3d3d3, #e4e4e4 12px);
}
.namebox, .fxbox, .value { height: 41px; border: 1px solid #d4d4d4; background: #fff; }
.namebox { display: flex; width: 144px; padding-right: 8px; }
.namebox input { flex: 1; min-width: 0; padding: 0 7px; border: 0; background: none; color: #222; font: inherit; font-size: 21px; }
.dots { margin: 0 20px; }
.fxbox { display: flex; align-items: center; gap: 28px; width: 147px; padding-left: 17px; }
.fx { font-family: "Liberation Serif", serif; font-style: italic; font-size: 22px; }
.value { flex: 1; min-width: 0; margin-left: 6px; padding: 0 13px; color: #222; font: inherit; font-size: 20px; }

/* Sheet */
.sheet { flex: 1; background: #fdfdfd; }
.grid { width: 100%; border-collapse: separate; border-spacing: 0; table-layout: fixed; }
.c0 { width: 51px; }
.ca { width: 142px; }
.cb { width: 184px; }
.cc { width: 144px; }
.cd { width: 143px; }
.ce { width: 116px; }
.cf { width: 157px; }
.cg { width: 158px; }
.cn { width: 97px; }
.grid th, .grid td {
  height: 39px;
  padding: 0;
  border-right: 1px solid #dadada;
  border-bottom: 1px solid #dadada;
  font-size: 20px;
  font-weight: 400;
  line-height: 30px;
  white-space: nowrap;
}
.grid th { color: #222; background: #e6e6e6; border-color: #cdcdcd; }
.grid .letters th { height: 32px; border-bottom-color: #b5b5b5; line-height: 29px; }
.grid .letters .sel { background: #c8c8c8; color: #1a6b3c; border-bottom: 2px solid #15793f; }
.grid .letters .dim { padding-right: 6px; color: #888; }
.corner svg { margin-left: 24px; }
.grid .blank th, .grid .blank td { height: 37px; }
.grid .short th, .grid .short td { height: 36px; }
.grid .head th, .grid .head td { height: 40px; }
.grid .head td:nth-child(-n+8) { background: #347fc1; border-color: #5b9bd5; color: #fff; font-size: 21px; font-weight: 700; }
.head div { display: flex; align-items: center; justify-content: space-between; padding: 0 1px 0 8px; }
.head button {
  display: flex;
  align-items: center;
  justify-content: center;
  width: 28px;
  height: 30px;
  padding: 0;
  border: 1px solid #c9c4bd;
  background: #fcfcfc;
}
.head button::before {
  content: "";
  border: 6px solid transparent;
  border-top: 7px solid #666;
  border-bottom: 0;
}
.rec td { color: #1d1d1d; }
.grid .rec td:nth-child(-n+8) { padding: 0 8px 0 7px; border-bottom-color: #9cc0e6; }
.grid .rec td:nth-child(8) { border-right-color: #9cc0e6; }
.band td:nth-child(-n+8) { background: #dae4f1; }
.grid .rec td:nth-child(2) { text-align: right; font-size: 22px; }
.grid .rec td:nth-child(n+6) { text-align: right; font-size: 21px; }
.grid .current th { background: #cfcfcf; color: #1a6b3c; border-right: 2px solid #15793f; }
.grid .picked { position: relative; outline: 2px solid #15793f; outline-offset: -1px; }
.picked::after {
  content: "";
  position: absolute;
  right: -3px;
  bottom: -3px;
  width: 6px;
  height: 6px;
  background: #15793f;
  outline: 1px solid #fff;
}

/* Context menu */
.menu {
  position: absolute;
  top: 260px;
  left: 1239px;
  display: flex;
  flex-direction: column;
  width: 339px;
  padding: 9px 0 5px;
  border: 1px solid #c4c4c4;
  background: #fdfdfd;
  box-shadow: 2px 3px 5px rgba(0, 0, 0, .25);
  font-size: 19px;
  font-feature-settings: "palt";
}
.menu > input {
  height: 40px;
  margin: 0 10px 9px;
  padding: 0 18px;
  border: 1px solid #adadad;
  background: #fff;
  font: inherit;
  font-size: 18px;
  font-feature-settings: inherit;
}
.menu > input::placeholder { color: #6b6b6b; opacity: 1; }
.item {
  display: grid;
  grid-template-columns: 26px 1fr 10px;
  align-items: center;
  column-gap: 17px;
  height: 39px;
  padding: 0 17px 0 21px;
  border: 0;
  background: none;
  color: #222;
  font: inherit;
  font-feature-settings: inherit;
  text-align: left;
  white-space: nowrap;
}
.item svg { justify-self: center; }
.item u { text-underline-offset: 3px; text-decoration-thickness: 1px; }
.strong { font-size: 18px; font-weight: 700; }
.tall { height: 42px; }
.off { color: #a3a3a3; }
.hot { height: 43px; margin: 0 4px 3px; padding: 0 13px 0 17px; background: #e1e1e1; outline: 6px solid #f00; }
.pastes { display: flex; gap: 16px; height: 41px; align-items: center; padding-left: 67px; }
.menu hr { width: 276px; height: 1px; margin: 3px 0 3px 61px; border: 0; background: #dedede; }

/* Annotations */
.callout {
  position: absolute;
  display: flex;
  align-items: center;
  justify-content: center;
  height: 61px;
  padding-bottom: 2px;
  background: #f00;
  color: #fff;
  font-size: 34px;
  font-weight: 700;
  line-height: 40px;
  white-space: nowrap;
}
.first { top: 209px; left: 224px; width: 518px; font-size: 35px; }
.second { top: 624px; left: 657px; width: 550px; }
.half { font-feature-settings: "halt"; }
.close { margin-right: 5px; }
.arrow { position: absolute; }
.one { top: 256px; left: 392px; }
.two { top: 684px; left: 1150px; }
.point {
  position: absolute;
  top: 752px;
  left: 69px;
  width: 1128px;
  height: 183px;
  padding: 8px 16px;
  border: 5px solid #00135f;
  border-radius: 22px;
  background: #fffc70;
  color: #0c0c0c;
  font-weight: 700;
}
.point h2 {
  width: 165px;
  height: 49px;
  border-radius: 8px;
  background: #00135f;
  color: #fff;
  font-size: 32px;
  font-weight: 700;
  line-height: 47px;
  text-align: center;
}
.point ul { margin-top: 4px; padding-left: 34px; font-size: 28px; line-height: 35px; list-style: none; }
.point li { display: flex; align-items: center; white-space: nowrap; }
.point li::before { content: ""; width: 9px; height: 9px; margin: 0 15px 0 -24px; border-radius: 50%; background: #0c0c0c; }
```
